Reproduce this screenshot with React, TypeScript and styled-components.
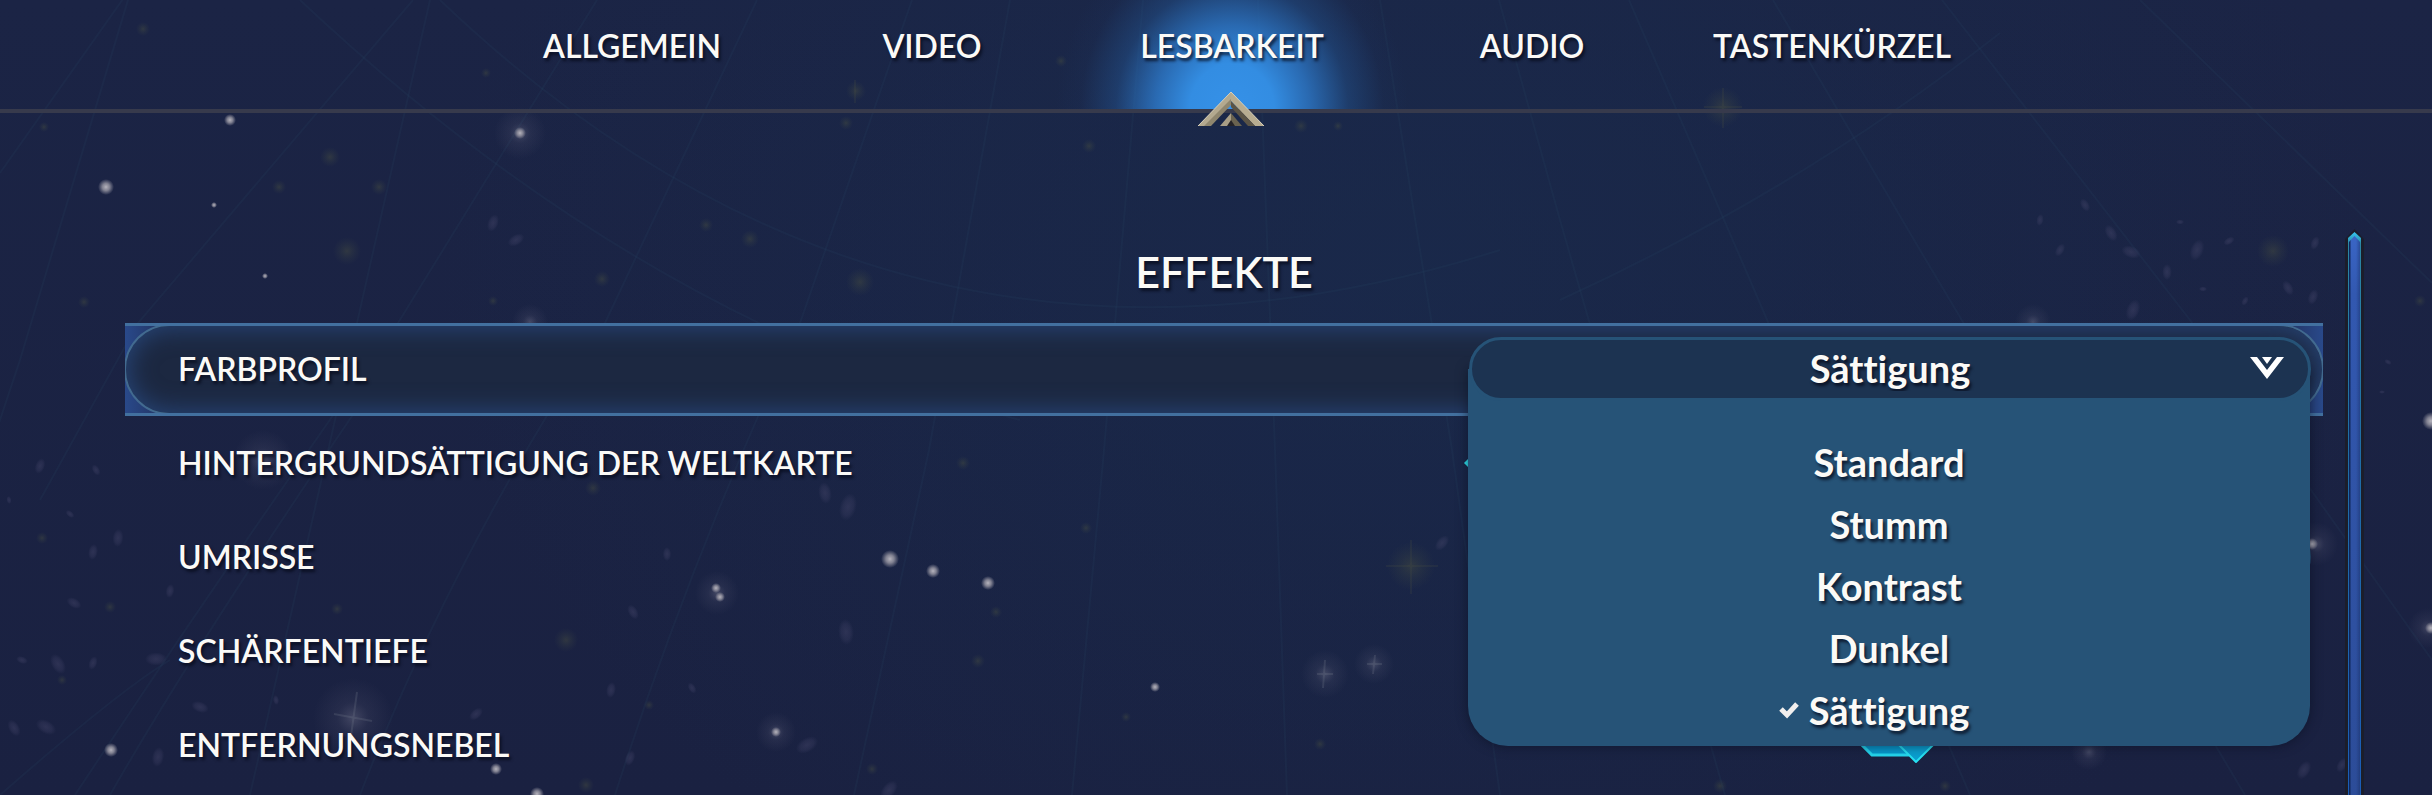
import React, { useState } from "react";
import styled, { createGlobalStyle } from "styled-components";

const GlobalStyle = createGlobalStyle`
  *, *::before, *::after { box-sizing: border-box; }
  body {
    margin: 0;
    background: #1b2444;
    color: #fbfaf7;
    font-family: Lato, "Open Sans", sans-serif;
    font-variant-ligatures: none;
  }
  button, select, input { font: inherit; font-variant-ligatures: none; color: inherit; }
`;

const Screen = styled.div`
  position: relative;
  display: flex;
  flex-direction: column;
  min-height: 100vh;
  overflow: hidden;
  background:
    radial-gradient(ellipse 40% 90% at 58% 35%, rgba(24, 46, 80, 0.5), rgba(24, 46, 80, 0)),
    linear-gradient(#1b2445, #1a2141);
`;

const Sky = styled.svg`
  position: absolute;
  inset: 0;
  width: 100%;
  height: 100%;
  pointer-events: none;
`;

const Header = styled.header`
  position: relative;
  border-bottom: 4px solid #373a4c;
`;

const TabBar = styled.nav`
  display: flex;
  justify-content: center;
  padding-left: 32px;
`;

const Tab = styled.button<{ $active?: boolean }>`
  position: relative;
  z-index: 0;
  flex: 0 1 300px;
  height: 109px;
  padding: 0 0 18px;
  border: 0;
  background: none;
  font-size: 32px;
  font-weight: 600;
  line-height: 40px;
  text-shadow: 2px 3px 3px rgba(5, 10, 25, 0.75);
  cursor: pointer;

  &::before {
    content: "";
    position: absolute;
    z-index: -1;
    inset: 0 -30px;
    background: ${(p) =>
      p.$active
        ? "radial-gradient(ellipse 176px 190px at 50% 100%, #3591e8 0%, #338de2 24%, rgba(45, 120, 200, 0.82) 44%, rgba(36, 90, 155, 0.42) 66%, rgba(30, 60, 110, 0.12) 86%, rgba(30, 60, 110, 0) 100%)"
        : "none"};
  }
`;

const TabMarker = styled.svg`
  position: absolute;
  left: 50%;
  bottom: -17px;
  width: 66px;
  height: 34px;
  margin-left: -34px;
`;

const Content = styled.main`
  position: relative;
  flex: 1;
  display: flex;
  padding: 116px 68px 0 125px;
`;

const Settings = styled.section`
  flex: 1;
  min-width: 0;
`;

const Title = styled.h1`
  margin: 19px 0 27px;
  font-size: 43px;
  font-weight: 600;
  line-height: 48px;
  text-align: center;
  text-shadow: 2px 3px 3px rgba(5, 10, 25, 0.75);
`;

const Row = styled.div<{ $active?: boolean }>`
  position: relative;
  z-index: ${(p) => (p.$active ? 1 : 0)};
  display: grid;
  grid-template-columns: minmax(0, 1fr) 842px;
  align-items: center;
  height: 94px;
  padding: 0 12px 2px 53px;
`;

const RowFrame = styled.div`
  position: absolute;
  inset: 0 0 1px;
  overflow: hidden;
  border: solid #42709f;
  border-width: 3px 0;
  background: linear-gradient(90deg, #29498a, #24386a 30px, #24386a calc(100% - 30px), #29498a);

  &::before {
    content: "";
    position: absolute;
    inset: -2px -1px;
    border: 2px solid #426a90;
    border-radius: 46px;
    background: #1c2841;
    box-shadow: inset 0 0 24px 2px #274578;
  }
`;

const Label = styled.label`
  position: relative;
  font-size: 32px;
  font-weight: 600;
  line-height: 40px;
  white-space: nowrap;
  text-shadow: 2px 3px 3px rgba(5, 10, 25, 0.75);
`;

const Control = styled.div`
  position: relative;
  display: flex;
  justify-content: center;
`;

const Select = styled.select`
  position: relative;
  width: 100%;
  height: 64px;
  padding: 0 0 2px;
  border: 3px solid #265377;
  border-radius: 32px;
  background: #1c3351;
  appearance: none;
  font-size: 38px;
  font-weight: 700;
  text-align: center;
  text-align-last: center;
  text-shadow: 2px 3px 3px rgba(5, 10, 25, 0.75);
`;

const Arrow = styled.svg`
  position: absolute;
  top: 20px;
  right: 27px;
  width: 34px;
  height: 22px;
  pointer-events: none;
`;

const Menu = styled.ul`
  position: absolute;
  top: 32px;
  left: -1px;
  right: 1px;
  height: 377px;
  margin: 0;
  padding: 62px 0 0;
  border-radius: 0 0 40px 40px;
  background: #265377;
  box-shadow: 0 0 12px rgba(8, 14, 30, 0.6);
  list-style: none;
`;

const Option = styled.li`
  display: flex;
  align-items: center;
  justify-content: center;
  height: 62px;
  font-size: 38px;
  font-weight: 700;
  line-height: 44px;
  text-shadow: 2px 3px 3px rgba(5, 10, 25, 0.75);
  cursor: pointer;
`;

const OptionText = styled.span`
  position: relative;
`;

const Check = styled.svg`
  position: absolute;
  right: 100%;
  top: 14px;
  width: 20px;
  height: 17px;
  margin-right: 10px;
`;

const Range = styled.input`
  flex: 1;
  height: 10px;
  margin: 0 3px 0 -5px;
  appearance: none;
  background: #2ee6f2;
  clip-path: polygon(0 50%, 5px 0, calc(100% - 5px) 0, 100% 50%, calc(100% - 5px) 100%, 5px 100%);
`;

const Switch = styled.span`
  position: relative;
  display: block;
  width: 88px;
  height: 36px;

  input {
    position: absolute;
    inset: 0;
    width: 100%;
    height: 100%;
    margin: 0;
    opacity: 0;
  }

  svg {
    display: block;
  }
`;

const Scrollbar = styled.div`
  flex: none;
  width: 19px;
  margin-left: 22px;
  padding: 3px 3px 0;
  background: #1b1e2b;
  clip-path: polygon(0 10px, 50% 0, 100% 10px, 100% 100%, 0 100%);
`;

const ScrollThumb = styled.div`
  height: 100%;
  padding: 2px 1px 0;
  background: linear-gradient(#37c8f0, #2a86a4 12px, #1f6ea6 200px, #1a5cb8);
  clip-path: polygon(0 6px, 50% 0, 100% 6px, 100% 100%, 0 100%);

  &::before {
    content: "";
    display: block;
    height: 100%;
    background:
      linear-gradient(90deg, #10285c 1px, transparent 2px, transparent 7px, rgba(20, 40, 90, 0.4)),
      linear-gradient(#3a66c6, #3258b0 60px, #2c4c98);
    clip-path: polygon(0 8px, 50% 2px, 100% 8px, 100% 100%, 0 100%);
  }
`;

const meridians = [
  "M0 173L200 -110",
  "M128 0L20 360L-20 480",
  "M413 0L138 323L40 500",
  "M430 0L357 323L250 795",
  "M597 0L398 323Q230 560 75 795",
  "M416 323Q210 620 110 795",
  "M757 0L605 323Q450 560 360 795",
  "M912 0L800 323Q690 560 615 795",
  "M1010 0L929 450L854 795",
  "M1143 0L1104 450L1072 795",
  "M1258 0L1275 450L1287 795",
  "M1380 0L1452 450L1500 795",
  "M1499 0L1560 220L1725 795",
  "M1629 0L1750 280L1970 795",
  "M1773 0L1920 250L2245 795",
  "M1942 0L2190 320L2432 660",
  "M2140 0L2432 283",
  "M2000 33Q1800 190 1560 300",
  "M300 0Q640 320 1020 420",
  "M440 0Q900 440 1500 250",
  "M0 795Q120 690 170 660",
];

const brightStars: [number, number, number][] = [
  [106, 187, 6], [230, 120, 4], [214, 205, 1], [265, 276, 1], [520, 133, 4],
  [890, 559, 7], [933, 571, 5], [988, 583, 5], [1155, 687, 3], [716, 588, 3],
  [720, 597, 3], [776, 732, 3], [111, 750, 5], [496, 769, 4], [537, 794, 5],
  [2431, 421, 7], [2431, 628, 4], [2312, 544, 4],
];

const halos: [number, number, number][] = [
  [520, 133, 26], [717, 593, 22], [776, 732, 20], [1325, 674, 24], [1374, 664, 20],
  [353, 718, 40], [2033, 322, 18], [2316, 544, 22], [2428, 628, 20], [2089, 752, 18],
  [530, 322, 18], [263, 460, 30],
];

const goldStars: [number, number, number][] = [
  [279, 187, 7], [379, 187, 8], [347, 251, 14], [330, 157, 10], [706, 225, 7],
  [602, 279, 8], [493, 301, 5], [486, 73, 5], [750, 239, 9], [84, 302, 6],
  [1411, 566, 24], [1086, 528, 6], [996, 612, 6], [978, 661, 7], [872, 769, 6],
  [1126, 717, 5], [963, 463, 7], [1320, 744, 6], [593, 488, 8], [337, 609, 6],
  [42, 538, 6], [110, 607, 6], [62, 680, 5], [649, 705, 5], [566, 640, 12],
  [586, 785, 8], [2273, 251, 16], [2420, 301, 6], [1723, 107, 20], [860, 282, 14],
  [856, 91, 10], [143, 29, 7], [1089, 146, 7], [1301, 126, 7], [1338, 126, 5],
  [846, 123, 7], [1061, 61, 6], [1720, 786, 7], [44, 127, 5], [1945, 786, 6],
];

const dust: [number, number, number, number][] = [
  [70, 514, 5, 40], [93, 552, 8, 100], [118, 538, 9, 95], [74, 603, 8, 30], [58, 664, 11, 60],
  [93, 663, 7, 110], [156, 659, 11, 0], [200, 707, 9, 20], [46, 727, 11, 30], [14, 728, 9, 60],
  [170, 591, 7, 100], [40, 466, 8, 110], [96, 470, 6, 60], [667, 554, 7, 90], [633, 612, 8, 60],
  [476, 714, 8, 140], [158, 757, 10, 100], [848, 507, 14, 105], [846, 632, 13, 85], [825, 493, 11, 80],
  [807, 745, 12, 150], [1442, 543, 9, 130], [889, 790, 11, 130], [2111, 233, 9, 60], [2131, 252, 10, 20],
  [2197, 250, 11, 110], [2167, 272, 8, 90], [2133, 310, 11, 110], [2288, 288, 8, 60], [2313, 297, 8, 110],
  [2203, 289, 4, 0], [2229, 241, 6, 150], [2315, 243, 7, 110], [2245, 301, 5, 120], [2304, 770, 10, 120],
  [2342, 765, 8, 120], [493, 223, 9, 110], [516, 240, 9, 150], [22, 660, 6, 20], [276, 700, 5, 80],
  [611, 690, 8, 100], [630, 758, 8, 110], [692, 688, 6, 60], [9, 500, 4, 80], [2060, 250, 7, 120],
  [2085, 205, 7, 60], [2040, 220, 6, 100], [2388, 362, 4, 30], [2382, 392, 3, 0], [2180, 222, 4, 0],
];

function NightSky() {
  return (
    <Sky viewBox="0 0 2432 795" preserveAspectRatio="xMidYMid slice" aria-hidden="true">
      <defs>
        <radialGradient id="bright">
          <stop offset="0" stopColor="#b6b4bd" />
          <stop offset="0.45" stopColor="#93929f" stopOpacity="0.85" />
          <stop offset="1" stopColor="#8a8a99" stopOpacity="0" />
        </radialGradient>
        <radialGradient id="halo">
          <stop offset="0" stopColor="#8c8ba0" stopOpacity="0.36" />
          <stop offset="0.4" stopColor="#6d6c85" stopOpacity="0.14" />
          <stop offset="1" stopColor="#6d6c85" stopOpacity="0" />
        </radialGradient>
        <radialGradient id="gold">
          <stop offset="0" stopColor="#4a5040" stopOpacity="0.45" />
          <stop offset="0.5" stopColor="#414a42" stopOpacity="0.22" />
          <stop offset="1" stopColor="#3c4744" stopOpacity="0" />
        </radialGradient>
        <radialGradient id="dust">
          <stop offset="0" stopColor="#4a4a6e" stopOpacity="0.42" />
          <stop offset="0.6" stopColor="#44456a" stopOpacity="0.28" />
          <stop offset="1" stopColor="#44456a" stopOpacity="0" />
        </radialGradient>
      </defs>
      <g fill="none" stroke="#2c5068" strokeOpacity="0.14" strokeWidth="2">
        {meridians.map((d) => <path key={d} d={d} />)}
      </g>
      {dust.map(([x, y, r, a]) => (
        <ellipse key={`${x}-${y}`} cx={x} cy={y} rx={r} ry={r * 0.6} fill="url(#dust)" transform={`rotate(${a} ${x} ${y})`} />
      ))}
      {goldStars.map(([x, y, r]) => <circle key={`${x}-${y}`} cx={x} cy={y} r={r} fill="url(#gold)" />)}
      {halos.map(([x, y, r]) => <circle key={`${x}-${y}`} cx={x} cy={y} r={r} fill="url(#halo)" />)}
      {brightStars.map(([x, y, r]) => <circle key={`${x}-${y}`} cx={x} cy={y} r={r + 2} fill="url(#bright)" />)}
      <g stroke="#6b7386" strokeOpacity="0.28" strokeWidth="2">
        <path d="M1325 660L1323 688M1317 674H1333M1375 655L1373 674M1367 664H1382" />
        <path d="M357 692L351 736M334 714L372 721" />
      </g>
      <path d="M1411 540V594M1386 566H1438M1723 88V128M1704 107H1742M855 80V103" stroke="#4a5040" strokeOpacity="0.2" strokeWidth="2" />
    </Sky>
  );
}

function SwitchArt() {
  return (
    <svg width="88" height="36" viewBox="0 0 88 36" aria-hidden="true">
      <path d="M26 9H62L70 18L62 28H26L16 18Z" fill="#0798cc" stroke="#24d6ee" strokeWidth="3" />
      <path d="M70 1L87 18L70 35L53 18Z" fill="#0a9fd0" stroke="#27e0f2" strokeWidth="2" />
    </svg>
  );
}

function SelectArrow() {
  return (
    <Arrow viewBox="0 0 34 22" aria-hidden="true">
      <path d="M0 0H7L17 13L27 0H34L17 22Z" fill="#fff" />
      <path d="M12 0H22L17 7Z" fill="#fff" />
    </Arrow>
  );
}

const tabs = ["ALLGEMEIN", "VIDEO", "LESBARKEIT", "AUDIO", "TASTENKÜRZEL"];
const profiles = ["Standard", "Stumm", "Kontrast", "Dunkel", "Sättigung"];

export default function App() {
  const [tab, setTab] = useState("LESBARKEIT");
  const [profile, setProfile] = useState("Sättigung");

  return (
    <Screen>
      <GlobalStyle />
      <NightSky />
      <Header>
        <TabBar>
          {tabs.map((name) => (
            <Tab key={name} $active={name === tab} onClick={() => setTab(name)}>
              {name}
              {name === tab && (
                <TabMarker viewBox="0 0 66 34" aria-hidden="true">
                  <path d="M33 0L0 34H8L33 9Z" fill="#b3a98f" />
                  <path d="M33 7L6 34H13L33 13Z" fill="#8f866e" />
                  <path d="M33 0L66 34H57L33 9Z" fill="#b7ac90" />
                  <path d="M33 9L57 34H50L33 15Z" fill="#5b5445" />
                  <path d="M33 0L0 34M33 0L66 34" stroke="#d8d0bc" strokeWidth="1" />
                  <path d="M33 21L22 34H33Z" fill="#a89e86" />
                  <path d="M33 21L44 34H33Z" fill="#6a6350" />
                  <path d="M33 28L29 34H37Z" fill="#262428" />
                </TabMarker>
              )}
            </Tab>
          ))}
        </TabBar>
      </Header>

      <Content>
        <Settings>
          <Title>EFFEKTE</Title>

          <Row $active>
            <RowFrame />
            <Label htmlFor="profile">FARBPROFIL</Label>
            <Control>
              <Menu role="listbox" aria-label="FARBPROFIL">
                {profiles.map((name) => (
                  <Option key={name} role="option" aria-selected={name === profile} onClick={() => setProfile(name)}>
                    <OptionText>
                      {name === profile && (
                        <Check viewBox="0 0 20 17" aria-hidden="true">
                          <path d="M2 7L8 13L18 2" fill="none" stroke="#f1efee" strokeWidth="5" />
                        </Check>
                      )}
                      {name}
                    </OptionText>
                  </Option>
                ))}
              </Menu>
              <Select id="profile" value={profile} onChange={(e) => setProfile(e.target.value)}>
                {profiles.map((name) => <option key={name}>{name}</option>)}
              </Select>
              <SelectArrow />
            </Control>
          </Row>

          <Row>
            <Label htmlFor="map">HINTERGRUNDSÄTTIGUNG DER WELTKARTE</Label>
            <Control><Range id="map" type="range" defaultValue={50} /></Control>
          </Row>

          <Row>
            <Label htmlFor="outlines">UMRISSE</Label>
            <Control><Select id="outlines" /></Control>
          </Row>

          <Row>
            <Label htmlFor="depth">SCHÄRFENTIEFE</Label>
            <Control>
              <Switch><input id="depth" type="checkbox" defaultChecked /><SwitchArt /></Switch>
            </Control>
          </Row>

          <Row>
            <Label htmlFor="fog">ENTFERNUNGSNEBEL</Label>
            <Control>
              <Switch><input id="fog" type="checkbox" defaultChecked /><SwitchArt /></Switch>
            </Control>
          </Row>
        </Settings>
        <Scrollbar aria-hidden="true"><ScrollThumb /></Scrollbar>
      </Content>
    </Screen>
  );
}
